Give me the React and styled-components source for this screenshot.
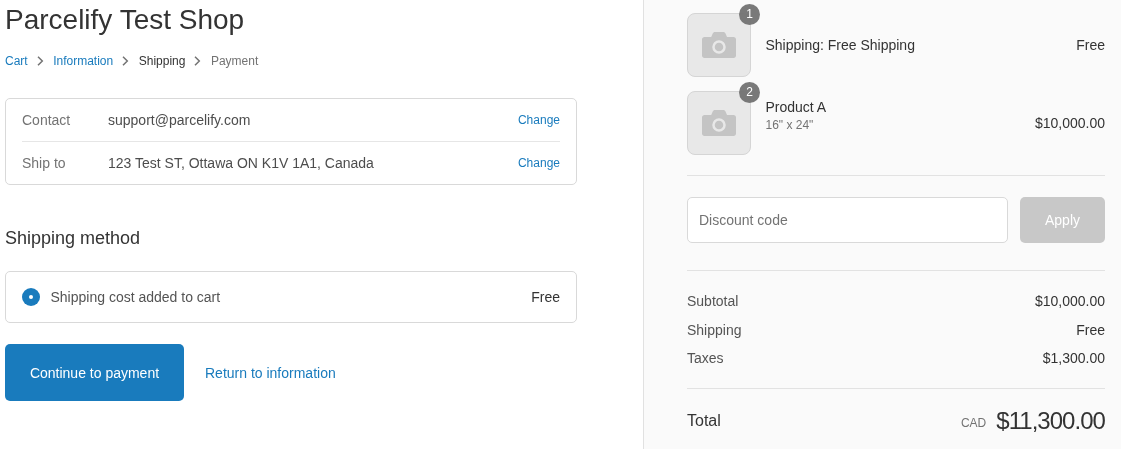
import React from 'react';
import styled, { createGlobalStyle } from 'styled-components';

const Global = createGlobalStyle`
  html, body { margin: 0; padding: 0; height: 449px; overflow: hidden; background: #fff; }
  body { font-family: "Liberation Sans", Arial, sans-serif; color: #333; }
  * { box-sizing: border-box; }
`;

const Page = styled.div`
  display: flex;
  width: 1121px;
  height: 449px;
  overflow: hidden;
  will-change: transform;
`;
const Main = styled.main`
  width: 644px;
  height: 449px;
  flex: none;
  padding: 0 66px 0 5px;
  border-right: 1px solid #e1e1e1;
  background: #fff;
`;
const Side = styled.aside`
  flex: 1;
  height: 449px;
  padding: 13px 16px 0 43px;
  background: #fafafa;
`;
const Title = styled.h1`
  margin: 0;
  height: 40px;
  font-size: 28px;
  line-height: 40px;
  font-weight: 400;
  color: #333;
`;
const Crumbs = styled.nav`
  display: flex;
  align-items: center;
  height: 14px;
  margin-top: 14px;
  font-size: 12px;
`;
const Crumb = styled.span`
  color: ${p => p.$c};
  line-height: 14px;
`;
const Sep = styled.svg`
  width: 10px;
  height: 10px;
  margin: 0 8.5px 0 7px;
  flex: none;
`;
const Chevron = () => (
  <Sep viewBox="0 0 10 10"><path d="M3 0.7 L7.3 5 L3 9.3" fill="none" stroke="#737373" strokeWidth="1.5" /></Sep>
);
const Card = styled.section`
  width: 572px;
  border: 1px solid #d9d9d9;
  border-radius: 5px;
  background: #fff;
`;
const Review = styled(Card)`
  margin-top: 30px;
  padding: 0 16px;
  height: 87px;
`;
const ReviewRow = styled.div`
  display: flex;
  align-items: center;
  height: ${p => p.$h}px;
  font-size: 14px;
  & + & { border-top: 1px solid #e6e6e6; }
`;
const Label = styled.span`
  width: 86px;
  color: #737373;
`;
const Value = styled.span`
  flex: 1;
  color: #4d4d4d;
`;
const ChangeLink = styled.a`
  font-size: 12px;
  color: #197bbd;
`;
const Heading = styled.h2`
  margin: 42px 0 0;
  height: 22px;
  font-size: 18px;
  line-height: 22px;
  font-weight: 400;
  color: #333;
`;
const Method = styled(Card)`
  margin-top: 22px;
  height: 52px;
  padding: 0 16px;
  display: flex;
  align-items: center;
  font-size: 14px;
`;
const Radio = styled.span`
  width: 18px;
  height: 18px;
  border-radius: 50%;
  background: #197bbd;
  display: flex;
  align-items: center;
  justify-content: center;
  margin-right: 10.5px;
  &::after {
    content: "";
    width: 4px;
    height: 4px;
    border-radius: 50%;
    background: #fff;
  }
`;
const MethodName = styled.span`
  flex: 1;
  color: #545454;
`;
const MethodPrice = styled.span`
  color: #333;
`;
const Actions = styled.div`
  display: flex;
  align-items: center;
  margin-top: 21px;
`;
const Primary = styled.button`
  width: 179px;
  height: 57px;
  border: 0;
  border-radius: 5px;
  background: #197bbd;
  color: #fff;
  font: 14px "Liberation Sans", Arial, sans-serif;
`;
const Return = styled.a`
  margin-left: 21px;
  font-size: 14px;
  color: #197bbd;
`;
const Item = styled.div`
  display: flex;
  align-items: center;
  height: 64px;
  margin-bottom: 14px;
`;
const Thumb = styled.div`
  position: relative;
  width: 64px;
  height: 64px;
  flex: none;
  border: 1px solid #d5d5d5;
  border-radius: 8px;
  background: #e8e8e8;
  display: flex;
  align-items: center;
  justify-content: center;
`;
const Badge = styled.span`
  position: absolute;
  top: -10px;
  right: -10px;
  width: 21px;
  height: 21px;
  border-radius: 50%;
  background: rgba(114,114,114,.95);
  color: #fff;
  font-size: 12px;
  line-height: 21px;
  text-align: center;
`;
const ItemText = styled.div`
  flex: 1;
  margin-left: 14.5px;
  padding-bottom: ${p => p.$raised ? 15 : 0}px;
`;
const ItemName = styled.div`
  font-size: 14px;
  line-height: 16px;
  color: #333;
`;
const ItemSub = styled.div`
  font-size: 12px;
  line-height: 14px;
  margin-top: 3px;
  color: #737373;
`;
const ItemPrice = styled.span`
  font-size: 14px;
  color: #333;
`;
const Rule = styled.hr`
  margin: ${p => p.$t}px 0 0;
  border: 0;
  border-top: 1px solid #e2e2e2;
`;
const Discount = styled.div`
  display: flex;
  gap: 12px;
  margin-top: 21px;
`;
const Input = styled.input`
  width: 321px;
  height: 46px;
  padding: 0 11px;
  border: 1px solid #d9d9d9;
  border-radius: 5px;
  background: #fff;
  font: 14px "Liberation Sans", Arial, sans-serif;
  &::placeholder { color: #737373; opacity: 1; }
`;
const Apply = styled.button`
  width: 85px;
  height: 46px;
  border: 0;
  border-radius: 5px;
  background: #c8c8c8;
  color: #fff;
  font: 14px "Liberation Sans", Arial, sans-serif;
`;
const Totals = styled.div`
  margin-top: 15px;
`;
const TotalRow = styled.div`
  display: flex;
  justify-content: space-between;
  align-items: center;
  height: ${p => p.$h}px;
  font-size: 14px;
  color: #545454;
`;
const TotalAmount = styled.span`
  color: #333;
`;
const Grand = styled.div`
  display: flex;
  align-items: center;
  margin-top: 16px;
  height: 32px;
`;
const GrandLabel = styled.span`
  flex: 1;
  font-size: 16px;
  color: #333;
`;
const Currency = styled.span`
  font-size: 12px;
  color: #737373;
  margin-right: 10px;
  padding-top: 4px;
`;
const GrandAmount = styled.span`
  font-size: 24px;
  letter-spacing: -0.96px;
  color: #333;
`;

const Camera = () => (
  <svg width="34" height="26" viewBox="0 0 34 26">
    <path fill="#c4c4c4" d="M2.5 5h6.700l1.500-3.500C11.100.6 11.900 0 12.800 0h8.600c.9 0 1.700.6 2.100 1.500L25 5h6.500C33 5 34 6 34 7.500V23.500C34 25 33 26 31.500 26h-29C1 26 0 25 0 23.500V7.500C0 6 1 5 2.500 5z" />
    <circle cx="17" cy="15" r="5.500" fill="none" stroke="#e8e8e8" strokeWidth="2.5" />
  </svg>
);

const rows = [
  ['Subtotal', '$10,000.00', 29],
  ['Shipping', 'Free', 29],
  ['Taxes', '$1,300.00', 28],
];

export default function App() {
  return (
    <Page>
      <Global />
      <Main>
        <Title>Parcelify Test Shop</Title>
        <Crumbs>
          <Crumb $c="#197bbd">Cart</Crumb><Chevron />
          <Crumb $c="#197bbd">Information</Crumb><Chevron />
          <Crumb $c="#333">Shipping</Crumb><Chevron />
          <Crumb $c="#737373">Payment</Crumb>
        </Crumbs>
        <Review>
          <ReviewRow $h={42}><Label>Contact</Label><Value>support@parcelify.com</Value><ChangeLink>Change</ChangeLink></ReviewRow>
          <ReviewRow $h={43}><Label>Ship to</Label><Value>123 Test ST, Ottawa ON K1V 1A1, Canada</Value><ChangeLink>Change</ChangeLink></ReviewRow>
        </Review>
        <Heading>Shipping method</Heading>
        <Method><Radio /><MethodName>Shipping cost added to cart</MethodName><MethodPrice>Free</MethodPrice></Method>
        <Actions><Primary>Continue to payment</Primary><Return>Return to information</Return></Actions>
      </Main>
      <Side>
        <Item>
          <Thumb><Camera /><Badge>1</Badge></Thumb>
          <ItemText><ItemName>Shipping: Free Shipping</ItemName></ItemText>
          <ItemPrice>Free</ItemPrice>
        </Item>
        <Item>
          <Thumb><Camera /><Badge>2</Badge></Thumb>
          <ItemText $raised><ItemName>Product A</ItemName><ItemSub>16" x 24"</ItemSub></ItemText>
          <ItemPrice>$10,000.00</ItemPrice>
        </Item>
        <Rule $t={20} />
        <Discount><Input placeholder="Discount code" /><Apply>Apply</Apply></Discount>
        <Rule $t={27} />
        <Totals>
          {rows.map(([l, v, h]) => <TotalRow key={l} $h={h}><span>{l}</span><TotalAmount>{v}</TotalAmount></TotalRow>)}
        </Totals>
        <Rule $t={16} />
        <Grand><GrandLabel>Total</GrandLabel><Currency>CAD</Currency><GrandAmount>$11,300.00</GrandAmount></Grand>
      </Side>
    </Page>
  );
}
